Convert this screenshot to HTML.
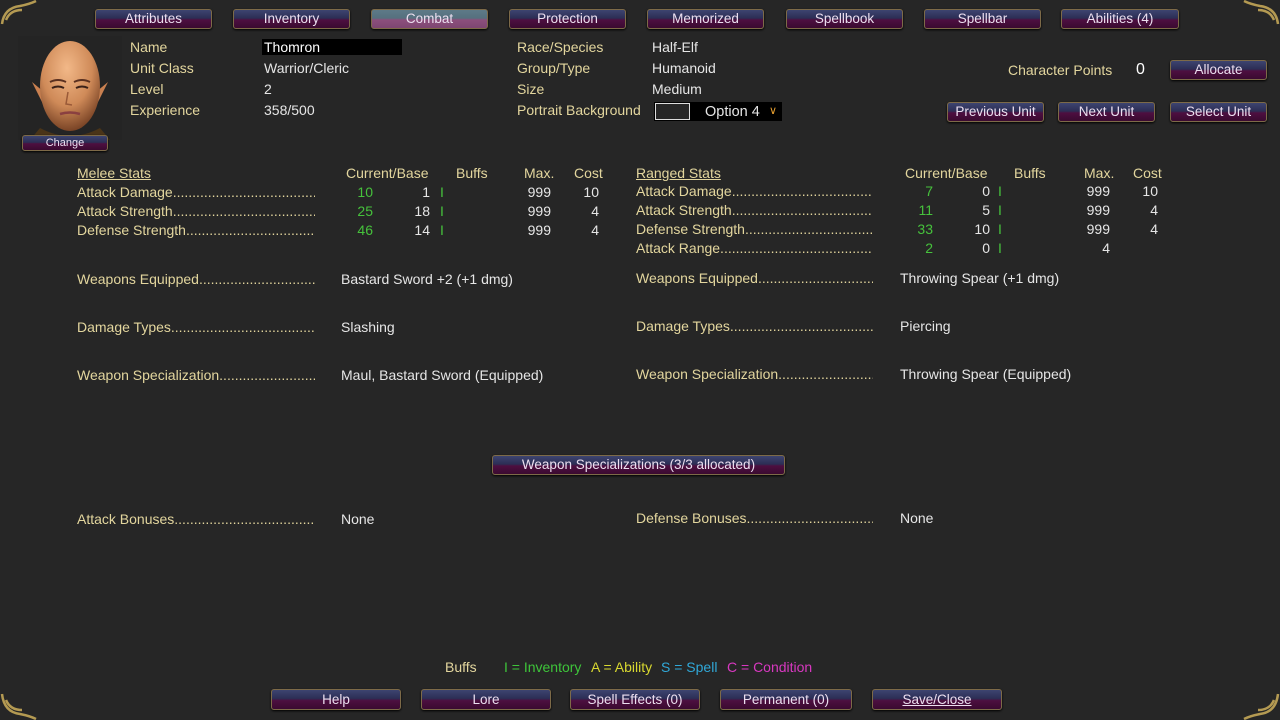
<!DOCTYPE html>
<html><head><meta charset="utf-8"><style>
body{margin:0;width:1280px;height:720px;background:#262626;overflow:hidden;position:relative;font-family:"Liberation Sans",sans-serif;font-size:14px;}
.t{position:absolute;line-height:16px;white-space:nowrap;color:#e6e6e6;}
.l{color:#e3d69e;}
.g{color:#46c23c;}
.r{text-align:right;}
.b{position:absolute;box-sizing:border-box;border:1px solid #7d6a48;border-radius:3px;background:linear-gradient(#3d4470 0%,#2c2e55 45%,#4d0f40 55%,#3a0a30 100%);color:#ecdff0;text-align:center;font-size:13.5px;box-shadow:0 1px 2px #000;}
.b.a{background:linear-gradient(#5e7a88 0%,#56707e 45%,#8c4f7c 55%,#7e4672 100%);}
.d{position:absolute;line-height:16px;white-space:nowrap;overflow:hidden;color:#e3d69e;}
</style></head><body>
<svg style="position:absolute;left:0;top:0" width="40" height="30"><path d="M2 24 Q4 8 20 6 Q30 4 36 1 M6 20 Q10 10 22 10" stroke="#b49a52" stroke-width="2.5" fill="none"/></svg>
<svg style="position:absolute;left:1240px;top:0" width="40" height="30"><path d="M38 24 Q36 8 20 6 Q10 4 4 1 M34 20 Q30 10 18 10" stroke="#b49a52" stroke-width="2.5" fill="none"/></svg>
<svg style="position:absolute;left:0;top:690px" width="40" height="30"><path d="M2 4 Q4 22 20 24 Q30 26 36 29 M6 10 Q10 20 22 20" stroke="#b49a52" stroke-width="2.5" fill="none"/></svg>
<svg style="position:absolute;left:1240px;top:690px" width="40" height="30"><path d="M38 4 Q36 22 20 24 Q10 26 4 29 M34 10 Q30 20 18 20" stroke="#b49a52" stroke-width="2.5" fill="none"/></svg>

<div class="b" style="left:95px;top:9px;width:117px;height:20px;line-height:18px">Attributes</div>
<div class="b" style="left:233px;top:9px;width:117px;height:20px;line-height:18px">Inventory</div>
<div class="b a" style="left:371px;top:9px;width:117px;height:20px;line-height:18px">Combat</div>
<div class="b" style="left:509px;top:9px;width:117px;height:20px;line-height:18px">Protection</div>
<div class="b" style="left:647px;top:9px;width:117px;height:20px;line-height:18px">Memorized</div>
<div class="b" style="left:786px;top:9px;width:117px;height:20px;line-height:18px">Spellbook</div>
<div class="b" style="left:924px;top:9px;width:117px;height:20px;line-height:18px">Spellbar</div>
<div class="b" style="left:1061px;top:9px;width:118px;height:20px;line-height:18px">Abilities (4)</div>

<svg style="position:absolute;left:18px;top:36px" width="104" height="104">
<defs><radialGradient id="sk" cx="45%" cy="30%" r="70%"><stop offset="0" stop-color="#f2b888"/><stop offset="0.6" stop-color="#cf8a58"/><stop offset="1" stop-color="#7a4426"/></radialGradient></defs>
<rect x="0" y="0" width="104" height="104" fill="#242424"/>
<path d="M22 92 Q52 108 82 92 L92 104 L12 104 Z" fill="#4a3418"/>
<path d="M14 46 L26 56 L26 70 Z M90 46 L78 56 L78 70 Z" fill="#c98050"/>
<ellipse cx="52" cy="50" rx="30" ry="45" fill="url(#sk)"/>
<path d="M32 46 Q40 42 48 46 M56 46 Q64 42 72 46" stroke="#5a3020" stroke-width="2" fill="none"/>
<path d="M34 52 Q40 49 46 52 M58 52 Q64 49 70 52" stroke="#3a2018" stroke-width="2" fill="none"/>
<path d="M50 56 L48 68 L54 69" stroke="#9a5a38" stroke-width="1.5" fill="none"/>
<path d="M42 78 Q52 75 62 78" stroke="#8a4040" stroke-width="2.5" fill="none"/>
</svg>
<div class="b" style="left:22px;top:135px;width:86px;height:16px;line-height:14px;font-size:11px">Change</div>

<div class="t l" style="left:130px;top:39px">Name</div>
<div style="position:absolute;left:262px;top:39px;width:140px;height:16px;background:#000"></div>
<div class="t" style="left:264px;top:39px;color:#fff">Thomron</div>
<div class="t l" style="left:130px;top:60px">Unit Class</div><div class="t" style="left:264px;top:60px">Warrior/Cleric</div>
<div class="t l" style="left:130px;top:81px">Level</div><div class="t" style="left:264px;top:81px">2</div>
<div class="t l" style="left:130px;top:102px">Experience</div><div class="t" style="left:264px;top:102px">358/500</div>

<div class="t l" style="left:517px;top:39px">Race/Species</div><div class="t" style="left:652px;top:39px">Half-Elf</div>
<div class="t l" style="left:517px;top:60px">Group/Type</div><div class="t" style="left:652px;top:60px">Humanoid</div>
<div class="t l" style="left:517px;top:81px">Size</div><div class="t" style="left:652px;top:81px">Medium</div>
<div class="t l" style="left:517px;top:102px">Portrait Background</div>
<div style="position:absolute;left:654px;top:102px;width:128px;height:19px;background:#000"></div>
<div style="position:absolute;left:655px;top:103px;width:33px;height:15px;border:1px solid #ddd;background:#262626"></div>
<div class="t" style="left:705px;top:104px;font-size:14.5px">Option 4</div>
<div class="t" style="left:769px;top:103px;color:#e8a030;font-size:11px">&#8744;</div>

<div class="t l" style="left:1008px;top:62px">Character Points</div>
<div class="t" style="left:1136px;top:62px;font-size:16px;color:#fff">0</div>
<div class="b" style="left:1170px;top:60px;width:97px;height:20px;line-height:18px">Allocate</div>
<div class="b" style="left:947px;top:102px;width:97px;height:20px;line-height:18px">Previous Unit</div>
<div class="b" style="left:1058px;top:102px;width:97px;height:20px;line-height:18px">Next Unit</div>
<div class="b" style="left:1170px;top:102px;width:97px;height:20px;line-height:18px">Select Unit</div>

<div class="t l" style="left:77px;top:165px;text-decoration:underline">Melee Stats</div>
<div class="t l" style="left:346px;top:165px">Current/Base</div>
<div class="t l" style="left:456px;top:165px">Buffs</div>
<div class="t l" style="left:524px;top:165px">Max.</div>
<div class="t l" style="left:574px;top:165px">Cost</div>
<div class="d" style="left:77px;top:184px;width:238px">Attack Damage......................................................</div>
<div class="d" style="left:77px;top:203px;width:238px">Attack Strength......................................................</div>
<div class="d" style="left:77px;top:222px;width:238px">Defense Strength......................................................</div>
<div class="t g r" style="left:333px;top:184px;width:40px">10</div><div class="t r" style="left:390px;top:184px;width:40px">1</div><div class="t g" style="left:440px;top:184px">I</div><div class="t r" style="left:511px;top:184px;width:40px">999</div><div class="t r" style="left:559px;top:184px;width:40px">10</div>
<div class="t g r" style="left:333px;top:203px;width:40px">25</div><div class="t r" style="left:390px;top:203px;width:40px">18</div><div class="t g" style="left:440px;top:203px">I</div><div class="t r" style="left:511px;top:203px;width:40px">999</div><div class="t r" style="left:559px;top:203px;width:40px">4</div>
<div class="t g r" style="left:333px;top:222px;width:40px">46</div><div class="t r" style="left:390px;top:222px;width:40px">14</div><div class="t g" style="left:440px;top:222px">I</div><div class="t r" style="left:511px;top:222px;width:40px">999</div><div class="t r" style="left:559px;top:222px;width:40px">4</div>

<div class="t l" style="left:636px;top:165px;text-decoration:underline">Ranged Stats</div>
<div class="t l" style="left:905px;top:165px">Current/Base</div>
<div class="t l" style="left:1014px;top:165px">Buffs</div>
<div class="t l" style="left:1084px;top:165px">Max.</div>
<div class="t l" style="left:1133px;top:165px">Cost</div>
<div class="d" style="left:636px;top:183px;width:237px">Attack Damage......................................................</div>
<div class="d" style="left:636px;top:202px;width:237px">Attack Strength......................................................</div>
<div class="d" style="left:636px;top:221px;width:237px">Defense Strength......................................................</div>
<div class="d" style="left:636px;top:240px;width:237px">Attack Range......................................................</div>
<div class="t g r" style="left:893px;top:183px;width:40px">7</div><div class="t r" style="left:950px;top:183px;width:40px">0</div><div class="t g" style="left:998px;top:183px">I</div><div class="t r" style="left:1070px;top:183px;width:40px">999</div><div class="t r" style="left:1118px;top:183px;width:40px">10</div>
<div class="t g r" style="left:893px;top:202px;width:40px">11</div><div class="t r" style="left:950px;top:202px;width:40px">5</div><div class="t g" style="left:998px;top:202px">I</div><div class="t r" style="left:1070px;top:202px;width:40px">999</div><div class="t r" style="left:1118px;top:202px;width:40px">4</div>
<div class="t g r" style="left:893px;top:221px;width:40px">33</div><div class="t r" style="left:950px;top:221px;width:40px">10</div><div class="t g" style="left:998px;top:221px">I</div><div class="t r" style="left:1070px;top:221px;width:40px">999</div><div class="t r" style="left:1118px;top:221px;width:40px">4</div>
<div class="t g r" style="left:893px;top:240px;width:40px">2</div><div class="t r" style="left:950px;top:240px;width:40px">0</div><div class="t g" style="left:998px;top:240px">I</div><div class="t r" style="left:1070px;top:240px;width:40px">4</div>

<div class="d" style="left:77px;top:271px;width:238px">Weapons Equipped......................................................</div>
<div class="t" style="left:341px;top:271px">Bastard Sword +2 (+1 dmg)</div>
<div class="d" style="left:77px;top:319px;width:238px">Damage Types......................................................</div>
<div class="t" style="left:341px;top:319px">Slashing</div>
<div class="d" style="left:77px;top:367px;width:238px">Weapon Specialization......................................................</div>
<div class="t" style="left:341px;top:367px">Maul, Bastard Sword (Equipped)</div>

<div class="d" style="left:636px;top:270px;width:237px">Weapons Equipped......................................................</div>
<div class="t" style="left:900px;top:270px">Throwing Spear (+1 dmg)</div>
<div class="d" style="left:636px;top:318px;width:237px">Damage Types......................................................</div>
<div class="t" style="left:900px;top:318px">Piercing</div>
<div class="d" style="left:636px;top:366px;width:237px">Weapon Specialization......................................................</div>
<div class="t" style="left:900px;top:366px">Throwing Spear (Equipped)</div>

<div class="b" style="left:492px;top:455px;width:293px;height:20px;line-height:18px;font-size:13.5px">Weapon Specializations (3/3 allocated)</div>

<div class="d" style="left:77px;top:511px;width:238px">Attack Bonuses......................................................</div>
<div class="t" style="left:341px;top:511px">None</div>
<div class="d" style="left:636px;top:510px;width:237px">Defense Bonuses......................................................</div>
<div class="t" style="left:900px;top:510px">None</div>

<div class="t l" style="left:445px;top:659px">Buffs</div>
<div class="t" style="left:504px;top:659px;color:#3ec43a">I = Inventory</div>
<div class="t" style="left:591px;top:659px;color:#d8d830">A = Ability</div>
<div class="t" style="left:661px;top:659px;color:#30a8d8">S = Spell</div>
<div class="t" style="left:727px;top:659px;color:#d838c0">C = Condition</div>

<div class="b" style="left:271px;top:689px;width:130px;height:21px;line-height:19px">Help</div>
<div class="b" style="left:421px;top:689px;width:130px;height:21px;line-height:19px">Lore</div>
<div class="b" style="left:570px;top:689px;width:130px;height:21px;line-height:19px">Spell Effects (0)</div>
<div class="b" style="left:720px;top:689px;width:132px;height:21px;line-height:19px">Permanent (0)</div>
<div class="b" style="left:872px;top:689px;width:130px;height:21px;line-height:19px;text-decoration:underline">Save/Close</div>
</body></html>
